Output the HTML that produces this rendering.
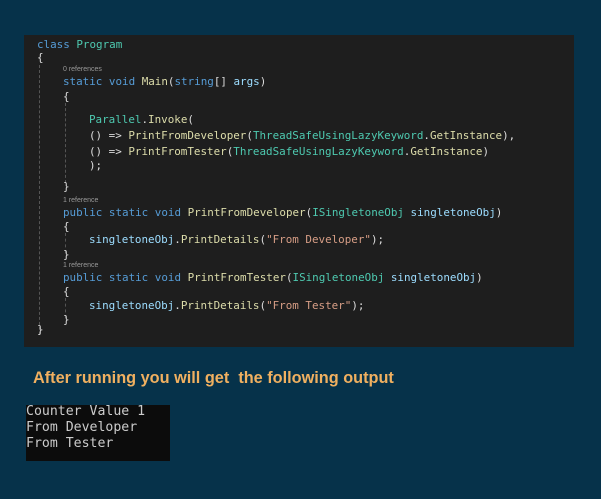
<!DOCTYPE html>
<html><head><style>
body{margin:0;background:#06324a;width:601px;height:499px;position:relative;overflow:hidden}
#code{position:absolute;left:24px;top:35px;width:550px;height:312px;background:#1e1e1e}
.l{position:absolute;white-space:pre;font-family:"DejaVu Sans Mono",monospace;font-size:10.9px;color:#dcdcdc;line-height:14px}
.r{position:absolute;white-space:pre;font-family:"Liberation Sans",sans-serif;font-size:7px;color:#999;line-height:9px}
.k{color:#569cd6}.t{color:#4ec9b0}.m{color:#dcdcaa}.v{color:#9cdcfe}.s{color:#d69d85}
.g{position:absolute;border-left:1px dashed #555;width:0}
#out{position:absolute;left:26px;top:405px;width:144px;height:56px;background:#0c0c0c}
.o{position:absolute;left:0;white-space:pre;font-family:"DejaVu Sans Mono",monospace;font-size:13.2px;color:#cccccc;line-height:16px}
h1{position:absolute;left:33px;top:369px;margin:0;font-family:"Liberation Sans",sans-serif;font-weight:bold;font-size:16.3px;color:#f0b060}
</style></head><body>
<div id="code">
<div class="g" style="left:15px;top:30px;height:270px"></div>
<div class="g" style="left:41px;top:68px;height:80px"></div>
<div class="g" style="left:41px;top:198px;height:20px"></div>
<div class="g" style="left:41px;top:263px;height:20px"></div>
<div class="l" style="left:13px;top:3px"><span class="k">class</span> <span class="t">Program</span></div>
<div class="l" style="left:13px;top:16px">{</div>
<div class="r" style="left:39px;top:30px">0 references</div>
<div class="l" style="left:39px;top:40px"><span class="k">static void</span> <span class="m">Main</span>(<span class="k">string</span>[] <span class="v">args</span>)</div>
<div class="l" style="left:39px;top:55px">{</div>
<div class="l" style="left:65px;top:78px"><span class="t">Parallel</span>.<span class="m">Invoke</span>(</div>
<div class="l" style="left:65px;top:94px">() =&gt; <span class="m">PrintFromDeveloper</span>(<span class="t">ThreadSafeUsingLazyKeyword</span>.<span class="m">GetInstance</span>),</div>
<div class="l" style="left:65px;top:110px">() =&gt; <span class="m">PrintFromTester</span>(<span class="t">ThreadSafeUsingLazyKeyword</span>.<span class="m">GetInstance</span>)</div>
<div class="l" style="left:65px;top:124px">);</div>
<div class="l" style="left:39px;top:145px">}</div>
<div class="r" style="left:39px;top:161px">1 reference</div>
<div class="l" style="left:39px;top:171px"><span class="k">public static void</span> <span class="m">PrintFromDeveloper</span>(<span class="t">ISingletoneObj</span> <span class="v">singletoneObj</span>)</div>
<div class="l" style="left:39px;top:185px">{</div>
<div class="l" style="left:65px;top:198px"><span class="v">singletoneObj</span>.<span class="m">PrintDetails</span>(<span class="s">"From Developer"</span>);</div>
<div class="l" style="left:39px;top:213px">}</div>
<div class="r" style="left:39px;top:226px">1 reference</div>
<div class="l" style="left:39px;top:236px"><span class="k">public static void</span> <span class="m">PrintFromTester</span>(<span class="t">ISingletoneObj</span> <span class="v">singletoneObj</span>)</div>
<div class="l" style="left:39px;top:250px">{</div>
<div class="l" style="left:65px;top:264px"><span class="v">singletoneObj</span>.<span class="m">PrintDetails</span>(<span class="s">"From Tester"</span>);</div>
<div class="l" style="left:39px;top:278px">}</div>
<div class="l" style="left:13px;top:288px">}</div>
</div>
<h1>After running you will get &nbsp;the following output</h1>
<div id="out">
<div class="o" style="top:-1px">Counter Value 1</div>
<div class="o" style="top:15px">From Developer</div>
<div class="o" style="top:31px">From Tester</div>
</div>
</body></html>
